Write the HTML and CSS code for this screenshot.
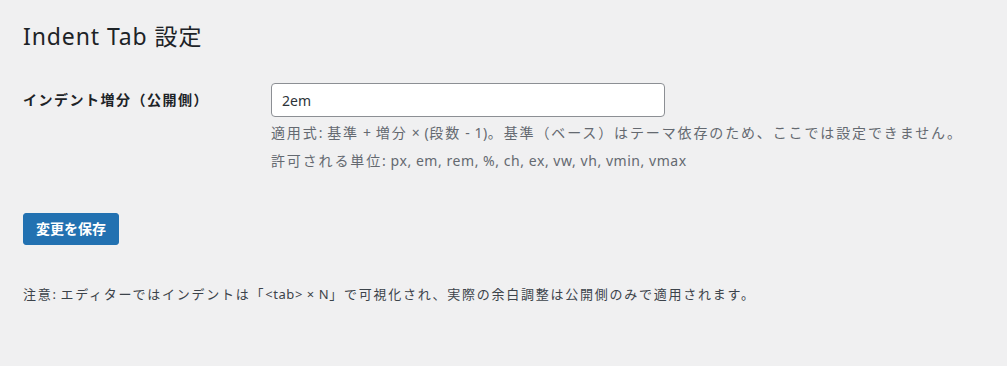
FILE: index.html
```html
<!DOCTYPE html>
<html lang="ja">
<head>
<meta charset="utf-8">
<title>Indent Tab 設定</title>
<link rel="stylesheet" href="styles.css">
</head>
<body>
<div class="wrap">
  <h1 class="title">Indent Tab 設定</h1>
  <form class="settings">
    <div class="row">
      <label class="label" for="indent">インデント増分（公開側）</label>
      <div class="field">
        <input id="indent" class="text-input" type="text" value="2em">
        <p class="description">適用式<span class="lat">: </span>基準<span class="lat"> + </span>増分<span class="lat"> × (</span>段数<span class="lat"> - 1)</span>。基準（ベース）はテーマ依存のため、ここでは設定できません。</p>
        <p class="description">許可される単位<span class="lat">: px, em, rem, %, ch, ex, vw, vh, vmin, vmax</span></p>
      </div>
    </div>
    <div class="submit">
      <button type="button" class="button-primary">変更を保存</button>
    </div>
  </form>
  <p class="note">注意<span class="lat">: </span>エディターではインデントは「<span class="lat">&lt;tab&gt; × N</span>」で可視化され、実際の余白調整は公開側のみで適用されます。</p>
</div>
</body>
</html>
```

FILE: styles.css
```css
html, body {
  margin: 0;
  padding: 0;
  background: #f0f0f1;
}
body {
  font-family: "Noto Sans", "Noto Sans CJK JP", sans-serif;
  color: #3c434a;
  font-size: 13px;
}
.wrap {
  padding: 21px 0 0 23px;
}
.title {
  margin: 0;
  font-size: 23px;
  font-weight: 400;
  line-height: 30px;
  letter-spacing: 0.9px;
  color: #1d2327;
}
.settings {
  margin: 0;
}
.row {
  display: grid;
  grid-template-columns: 248px 1fr;
  margin-top: 32px;
}
.label {
  font-size: 14px;
  font-weight: 700;
  color: #1d2327;
  line-height: 34px;
  letter-spacing: 1.5px;
}
.field {
  display: flex;
  flex-direction: column;
  align-items: flex-start;
}
.text-input {
  box-sizing: border-box;
  width: 394px;
  height: 34px;
  margin: 0;
  padding: 0 10px;
  border: 1px solid #8c8f94;
  border-radius: 4px;
  background: #fff;
  font-family: inherit;
  font-size: 14px;
  color: #2c3338;
}
.description {
  margin: 4px 0 0;
  font-size: 14px;
  line-height: 24px;
  letter-spacing: 1.87px;
  color: #646970;
}
.lat {
  letter-spacing: 0.55px;
}
.submit {
  margin-top: 40px;
}
.button-primary {
  box-sizing: border-box;
  height: 32px;
  padding: 0 12px;
  border: 1px solid #2271b1;
  border-radius: 3px;
  background: #2271b1;
  color: #fff;
  font-family: inherit;
  font-size: 14px;
  font-weight: 700;
  line-height: 30px;
}
.note {
  margin: 36px 0 0;
  font-size: 13px;
  line-height: 26px;
  letter-spacing: 1.75px;
  color: #3c434a;
}
```
